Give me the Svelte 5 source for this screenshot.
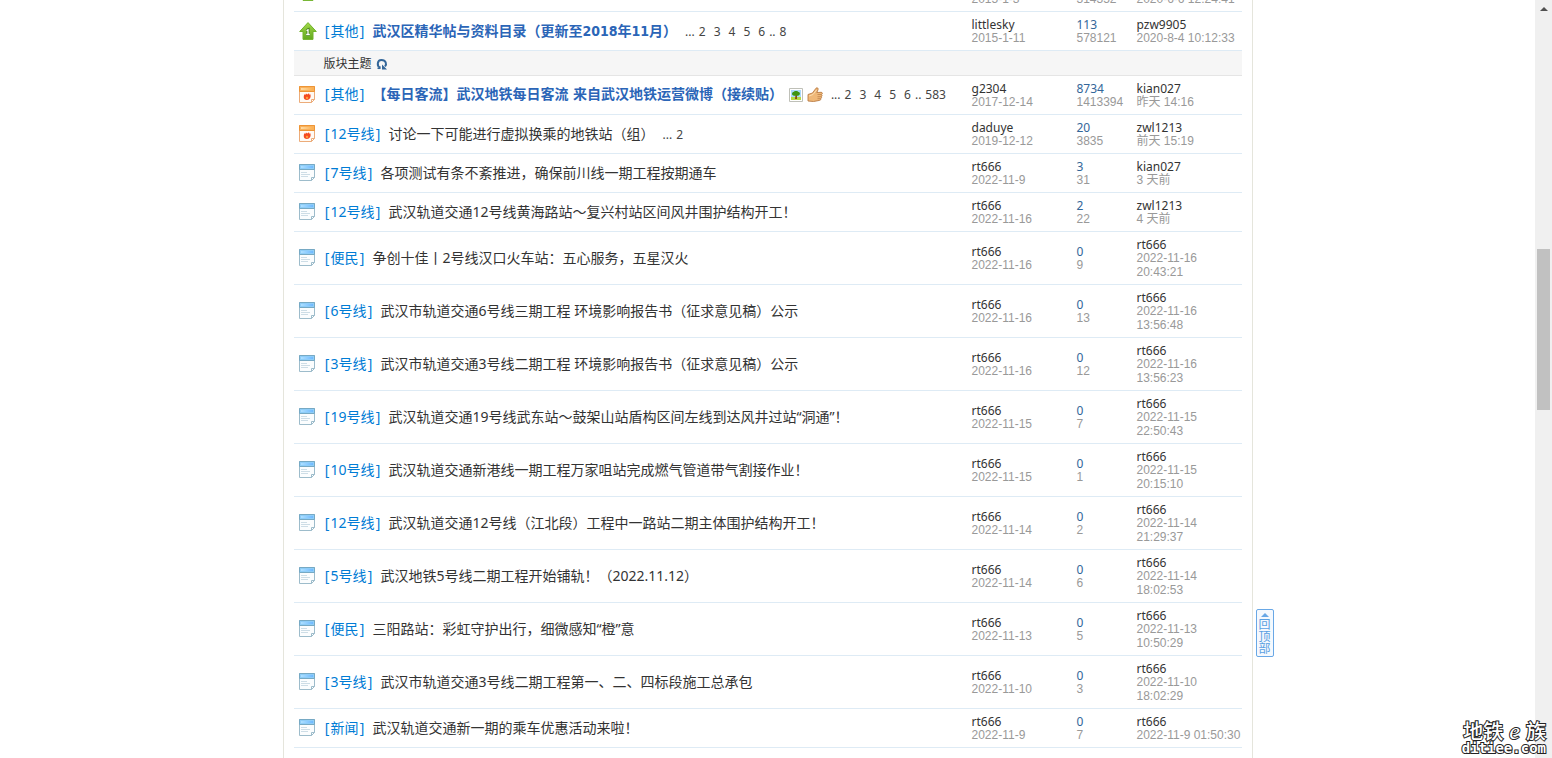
<script lang="ts">
  type Thread = {
    icon: 'pin' | 'hot' | 'page';
    tag: string;
    title: string;
    bold?: boolean;
    marks?: boolean;
    pages?: string[];
    lastPage?: string;
    author: string;
    date: string;
    replies: string;
    views: string;
    lastUser: string;
    lastTime: string;
  };

  const pinned: Thread[] = [
    { icon: 'pin', tag: '', title: '', author: '', date: '2015-1-3', replies: '', views: '314352', lastUser: '', lastTime: '2020-6-6 12:24:41' },
    { icon: 'pin', tag: '其他', title: '武汉区精华帖与资料目录（更新至2018年11月）', bold: true, pages: ['2', '3', '4', '5', '6'], lastPage: '8', author: 'littlesky', date: '2015-1-11', replies: '113', views: '578121', lastUser: 'pzw9905', lastTime: '2020-8-4 10:12:33' }
  ];

  const threads: Thread[] = [
    { icon: 'hot', tag: '其他', title: '【每日客流】武汉地铁每日客流 来自武汉地铁运营微博（接续贴）', bold: true, marks: true, pages: ['2', '3', '4', '5', '6'], lastPage: '583', author: 'g2304', date: '2017-12-14', replies: '8734', views: '1413394', lastUser: 'kian027', lastTime: '昨天 14:16' },
    { icon: 'hot', tag: '12号线', title: '讨论一下可能进行虚拟换乘的地铁站（组）', pages: ['2'], author: 'daduye', date: '2019-12-12', replies: '20', views: '3835', lastUser: 'zwl1213', lastTime: '前天 15:19' },
    { icon: 'page', tag: '7号线', title: '各项测试有条不紊推进，确保前川线一期工程按期通车', author: 'rt666', date: '2022-11-9', replies: '3', views: '31', lastUser: 'kian027', lastTime: '3 天前' },
    { icon: 'page', tag: '12号线', title: '武汉轨道交通12号线黄海路站～复兴村站区间风井围护结构开工！', author: 'rt666', date: '2022-11-16', replies: '2', views: '22', lastUser: 'zwl1213', lastTime: '4 天前' },
    { icon: 'page', tag: '便民', title: '争创十佳丨2号线汉口火车站：五心服务，五星汉火', author: 'rt666', date: '2022-11-16', replies: '0', views: '9', lastUser: 'rt666', lastTime: '2022-11-16 20:43:21' },
    { icon: 'page', tag: '6号线', title: '武汉市轨道交通6号线三期工程 环境影响报告书（征求意见稿）公示', author: 'rt666', date: '2022-11-16', replies: '0', views: '13', lastUser: 'rt666', lastTime: '2022-11-16 13:56:48' },
    { icon: 'page', tag: '3号线', title: '武汉市轨道交通3号线二期工程 环境影响报告书（征求意见稿）公示', author: 'rt666', date: '2022-11-16', replies: '0', views: '12', lastUser: 'rt666', lastTime: '2022-11-16 13:56:23' },
    { icon: 'page', tag: '19号线', title: '武汉轨道交通19号线武东站～鼓架山站盾构区间左线到达风井过站“洞通”！', author: 'rt666', date: '2022-11-15', replies: '0', views: '7', lastUser: 'rt666', lastTime: '2022-11-15 22:50:43' },
    { icon: 'page', tag: '10号线', title: '武汉轨道交通新港线一期工程万家咀站完成燃气管道带气割接作业！', author: 'rt666', date: '2022-11-15', replies: '0', views: '1', lastUser: 'rt666', lastTime: '2022-11-15 20:15:10' },
    { icon: 'page', tag: '12号线', title: '武汉轨道交通12号线（江北段）工程中一路站二期主体围护结构开工！', author: 'rt666', date: '2022-11-14', replies: '0', views: '2', lastUser: 'rt666', lastTime: '2022-11-14 21:29:37' },
    { icon: 'page', tag: '5号线', title: '武汉地铁5号线二期工程开始铺轨！（2022.11.12）', author: 'rt666', date: '2022-11-14', replies: '0', views: '6', lastUser: 'rt666', lastTime: '2022-11-14 18:02:53' },
    { icon: 'page', tag: '便民', title: '三阳路站：彩虹守护出行，细微感知“橙”意', author: 'rt666', date: '2022-11-13', replies: '0', views: '5', lastUser: 'rt666', lastTime: '2022-11-13 10:50:29' },
    { icon: 'page', tag: '3号线', title: '武汉市轨道交通3号线二期工程第一、二、四标段施工总承包', author: 'rt666', date: '2022-11-10', replies: '0', views: '3', lastUser: 'rt666', lastTime: '2022-11-10 18:02:29' },
    { icon: 'page', tag: '新闻', title: '武汉轨道交通新一期的乘车优惠活动来啦！', author: 'rt666', date: '2022-11-9', replies: '0', views: '7', lastUser: 'rt666', lastTime: '2022-11-9 01:50:30' }
  ];
</script>

{#snippet threadIcon(kind: string)}
  {#if kind === 'pin'}
    <svg class="icon" width="19" height="18" viewBox="0 0 19 18">
      <defs>
        <linearGradient id="leaf" x1="0" y1="0" x2="0" y2="1">
          <stop offset="0" stop-color="#a3d94a" />
          <stop offset="1" stop-color="#62a91f" />
        </linearGradient>
      </defs>
      <path d="M10 .6 18.300 9.500H15V17.400H5V9.500H1.700z" fill="url(#leaf)" stroke="#72b32c" stroke-linejoin="round" />
      <path d="M8.500 8.500 10 7.800V12.500M8.200 12.500H11.800" fill="none" stroke="#3f7d15" stroke-width="3" />
      <path d="M8.500 8.500 10 7.800V12.500M8.200 12.500H11.800" fill="none" stroke="#fff" stroke-width="1.300" />
    </svg>
  {:else}
    <svg class="icon" class:hot={kind === 'hot'} width="18" height="18" viewBox="0 1 18 18">
      <defs>
        <linearGradient id="blue"><stop offset="0" stop-color="#aee0ff" /><stop offset="1" stop-color="#6fb9ff" /></linearGradient>
        <linearGradient id="amber"><stop offset="0" stop-color="#ffdca6" /><stop offset="1" stop-color="#fdb04e" /></linearGradient>
      </defs>
      <path class="sheet" d="M1.5 1.5H16.5V14.5L13.5 17.5H1.5z" />
      <path class="bar" d="M1.5 1.5H16.5V6.5H1.5z" />
      <path d="M3 3H15V5H3z" fill={kind === 'hot' ? 'url(#amber)' : 'url(#blue)'} />
      <path class="fold" d="M16.5 14.5H13.5V17.5z" />
      {#if kind === 'hot'}
        <path d="M6.500 9c.3 1.200.8 1.300 1 .6L8 8.500l1.200 1.100L11 8.200l.4 1.600.9-.5c1 2.600-.3 5.700-3.400 5.700S5 12 6.500 9z" fill="#f4491f" />
        <path d="M7.800 12.500 9 11.500l1.300 1c0 2-2.500 2-2.500 0z" fill="#ffa13b" />
      {:else}
        <path d="M3 9.500h6M3 11.500h9M3 13.500h7" stroke="#cddde6" fill="none" />
      {/if}
    </svg>
  {/if}
{/snippet}

{#snippet row(t: Thread)}
  <tr>
    <td class="state">{@render threadIcon(t.icon)}</td>
    <td class="subject">
      <div class="line">
        {#if t.tag}
          <a class="tag" href="#tag"><span>[</span>{t.tag}<span>]</span></a>
          <a class="title" class:bold={t.bold} href="#thread">{t.title}</a>
        {/if}
        {#if t.marks}
          <svg class="mark" width="14" height="14" viewBox="0 0 14 14">
            <path d="M.5.5h13v13H.5z" fill="#fff" stroke="#bfc0b8" />
            <path d="M2 2h10v7H2z" fill="#a9d8fb" />
            <path d="M2 9h10v3H2z" fill="#b5d846" />
            <path d="M6.500 7h1.500v4H6z" fill="#8a4b14" />
            <path d="M3 6c0-1.500 1-2 1.500-2C5 2.500 9 2.500 9.500 4c1.500 0 2 2.500.5 3.200-1 .6-2 .8-3 .5C5.500 8.200 3 7.500 3 6z" fill="#3d9412" />
          </svg>
          <svg class="thumb-up" width="16" height="16" viewBox="0 0 16 16">
            <path d="M1 7.500 5.500 6 9 1.200c1.500-1 2.600.2 2 1.600L9.800 5.500l4.400-.2c1.500.1 1.500 2 .2 2.200 1 .5.800 2-.3 2.100.8.600.5 1.900-.5 2 .5.900-.1 1.700-1.100 1.800L6.500 14.500 1 14z" fill="#efb878" stroke="#b97b43" stroke-width=".9" />
            <path d="M10.500 7.500h3.500M10.500 9.700h3.400M10.500 11.700h2.700" stroke="#b97b43" stroke-width=".7" />
            <path d="M2 9l4-1.500L9.500 3" stroke="#fbdcae" fill="none" />
          </svg>
        {/if}
        {#if t.pages}
          <span class="pages">
            ...{#each t.pages as p}<a href="#page">{p}</a>{/each}{#if t.lastPage}..<a class="last" href="#page">{t.lastPage}</a>{/if}
          </span>
        {/if}
      </div>
    </td>
    <td class="by">
      <a href="#user">{t.author}</a>
      <span>{t.date}</span>
    </td>
    <td class="num">
      <a href="#thread">{t.replies}</a>
      <span>{t.views}</span>
    </td>
    <td class="by">
      <a href="#user">{t.lastUser}</a>
      <span>{t.lastTime}</span>
    </td>
  </tr>
{/snippet}

<div class="window">
  <div class="page">
    <main class="board">
      <table>
        <colgroup>
          <col class="c-icon" />
          <col />
          <col class="c-by" />
          <col class="c-num" />
          <col class="c-by" />
        </colgroup>
        <tbody>
          {#each pinned as t}
            {@render row(t)}
          {/each}
          <tr class="divider">
            <td></td>
            <td colspan="4">
              <div class="label">
                版块主题
                <button type="button" aria-label="刷新">
                  <svg width="12" height="12" viewBox="0 0 12 12">
                    <path d="M4.500 9.500C.5 8.500 1 2 5.500 2s5.500 4 3.500 6.500" fill="none" stroke="#336699" stroke-width="2" />
                    <path d="M6 6.500V11.500h5z" fill="#336699" />
                    <path d="M1.500 10.300h3" stroke="#336699" stroke-width="1.500" />
                  </svg>
                </button>
              </div>
            </td>
          </tr>
          {#each threads as t}
            {@render row(t)}
          {/each}
        </tbody>
      </table>
    </main>
    <a class="to-top" href="#top"><i></i>回顶部</a>
  </div>
  <div class="scrollbar">
    <i class="arrow"></i>
    <div class="handle"></div>
  </div>
  <div class="watermark">
    <strong>地铁<em>e</em>族</strong>
    <span>ditiee.com</span>
  </div>
</div>

<style>
  :global(body) {
    margin: 0;
    overflow: hidden;
    background: #fff;
  }

  .window {
    position: relative;
    display: flex;
    height: 100vh;
    overflow: hidden;
    color: #333;
    font-family: 'Noto Sans', 'Noto Sans CJK SC', sans-serif;
    font-size: 12px;
    line-height: 14px;
  }

  a {
    color: inherit;
    text-decoration: none;
  }

  .page {
    position: relative;
    flex: 1;
    overflow: hidden;
  }

  .board {
    box-sizing: border-box;
    width: 970px;
    max-width: 100%;
    min-height: calc(100% + 27px);
    margin: -27px auto 0;
    padding: 0 10px;
    border: solid #e5e5dc;
    border-width: 0 1px;
  }

  table {
    width: 100%;
    table-layout: fixed;
    border-collapse: separate;
    border-spacing: 0;
  }

  .c-icon {
    width: 30px;
  }

  .c-by {
    width: 105px;
  }

  .c-num {
    width: 60px;
  }

  td {
    padding: 5px 0;
    border-bottom: 1px solid #deebf5;
    vertical-align: middle;
  }

  .icon {
    display: block;
    margin-left: 4px;
  }

  .sheet {
    fill: #fbfdfe;
    stroke: #9dbccb;
  }

  .bar {
    fill: #8ecdf8;
    stroke: #76a9c4;
  }

  .fold {
    fill: #fff;
    stroke: #9dbccb;
  }

  .hot .sheet {
    fill: #fffaf4;
    stroke: #ecac7a;
  }

  .hot .bar {
    fill: #f9b15b;
    stroke: #ee9535;
  }

  .hot .fold {
    stroke: #ecac7a;
  }

  .line {
    display: flex;
    align-items: baseline;
    white-space: nowrap;
  }

  .line svg {
    align-self: center;
  }

  .tag {
    display: flex;
    margin-right: 7px;
    color: #007cd5;
    font-size: 14px;
  }

  .tag span {
    width: 7px;
    text-align: center;
  }

  .title {
    font-size: 14px;
  }

  .title.bold {
    color: #2b65b7;
    font-family: 'DejaVu Sans Condensed', 'DejaVu Sans', 'Noto Sans CJK SC', sans-serif;
    font-weight: 700;
  }

  .mark {
    margin-left: 6px;
  }

  .thumb-up {
    margin-left: 4px;
  }

  .pages {
    margin-left: 8px;
    color: #444;
  }

  .pages a {
    padding: 0 4px;
  }

  .pages .last {
    padding-right: 0;
  }

  .by a,
  .num a {
    display: block;
    min-height: 12px;
    padding-top: 2px;
    line-height: 12px;
  }

  .by span,
  .num span {
    display: block;
    color: #999;
    font-family: 'Liberation Sans', 'Noto Sans CJK SC', sans-serif;
  }

  .num a {
    color: #369;
  }

  .divider td {
    padding: 6px 0 4px;
    border-bottom-color: #e5e5e5;
    background: #f6f6f6;
  }

  .label {
    display: flex;
    align-items: center;
  }

  .divider button {
    width: 12px;
    height: 12px;
    margin-left: 4px;
    padding: 0;
    border: 0;
    background: none;
    cursor: pointer;
  }

  .divider svg {
    display: block;
  }

  .to-top {
    position: absolute;
    bottom: 101px;
    left: calc(50% + 488px);
    box-sizing: border-box;
    width: 18px;
    padding: 3px 2px 2px;
    border: 1px solid #69a8e6;
    border-radius: 2px;
    background: #f5f9fe;
    color: #5ba0e2;
    font-family: 'Noto Sans CJK SC', sans-serif;
    line-height: 12px;
    text-align: center;
    word-break: break-all;
  }

  .to-top i {
    display: block;
    width: 0;
    margin: 0 auto 1px;
    border: solid transparent;
    border-width: 0 4px 4px;
    border-bottom-color: #69a8e6;
  }

  .scrollbar {
    display: flex;
    flex-direction: column;
    width: 17px;
    background: #f0f0f0;
  }

  .arrow {
    width: 0;
    margin: 7px auto 0;
    border: solid transparent;
    border-width: 0 4px 4px;
    border-bottom-color: #505050;
  }

  .handle {
    height: 161px;
    margin: 238px 2px 0;
    background: #c1c1c1;
  }

  .watermark {
    position: absolute;
    right: 6px;
    bottom: 3px;
    display: flex;
    flex-direction: column;
    align-items: flex-end;
    color: #fff;
    -webkit-text-stroke: 2px #222;
    paint-order: stroke fill;
  }

  .watermark strong {
    font-family: 'Noto Sans CJK SC', sans-serif;
    font-size: 20px;
    font-weight: 500;
    line-height: 20px;
  }

  .watermark em {
    padding: 0 6px;
    font-family: 'Liberation Serif', serif;
    font-size: 24px;
  }

  .watermark span {
    font-family: 'DejaVu Sans Mono', monospace;
    font-size: 14px;
    font-weight: 700;
    line-height: 14px;
  }
</style>
